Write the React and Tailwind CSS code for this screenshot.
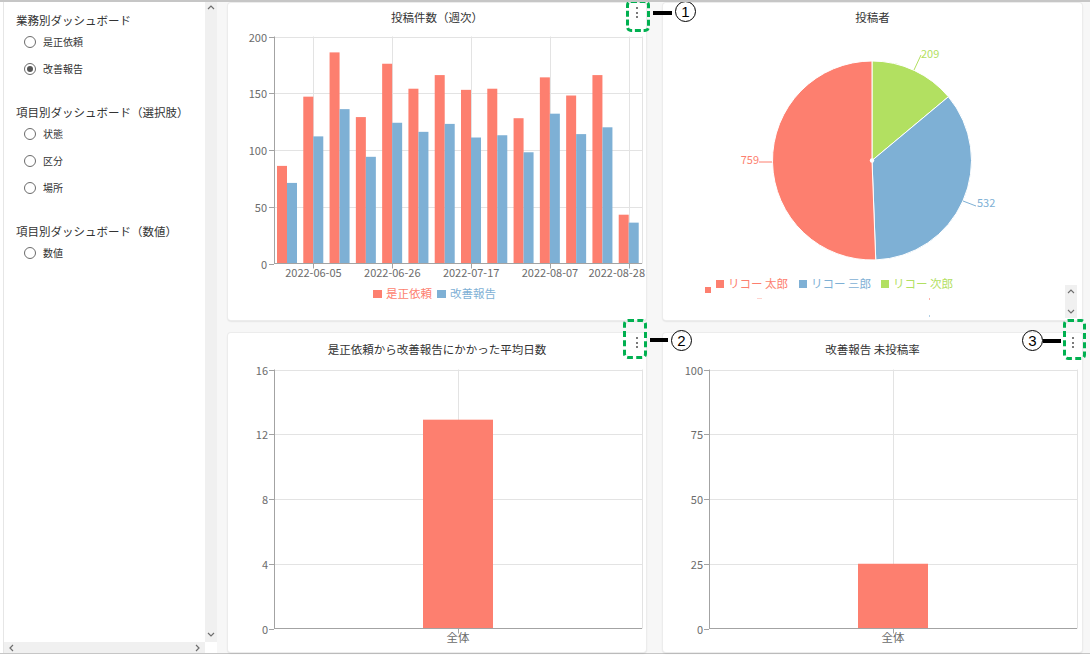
import React from 'react';

const RED = '#fd7f6f';
const BLUE = '#7eb0d5';
const GREEN = '#b2e061';
const GRID = '#e3e3e3';
const AXIS = '#a3a3a3';
const LABEL = '#6b6b6b';

// 週次の投稿件数 [是正依頼, 改善報告]
const weekly = [
  [86, 71], [147, 112], [186, 136], [129, 94], [176, 124], [154, 116], [166, 123],
  [153, 111], [154, 113], [128, 98], [164, 132], [148, 114], [166, 120], [43, 36],
];

const weekLabels = [
  { i: 1, text: '2022-06-05' },
  { i: 4, text: '2022-06-26' },
  { i: 7, text: '2022-07-17' },
  { i: 10, text: '2022-08-07' },
  { i: 13, text: '2022-08-28' },
];

const posters = [
  { name: 'リコー 次郎', value: 209, color: GREEN },
  { name: 'リコー 三郎', value: 532, color: BLUE },
  { name: 'リコー 太郎', value: 759, color: RED },
];

const sections = [
  { title: '業務別ダッシュボード', items: [{ label: '是正依頼' }, { label: '改善報告', checked: true }] },
  { title: '項目別ダッシュボード（選択肢）', items: [{ label: '状態' }, { label: '区分' }, { label: '場所' }] },
  { title: '項目別ダッシュボード（数値）', items: [{ label: '数値' }] },
];

const px = v => Math.round(v) + 0.5;

const Chevron = ({ up }) => (
  <svg width="8" height="6" viewBox="0 0 8 6">
    <polyline
      points={up ? '1,5 4,2 7,5' : '1,1 4,4 7,1'}
      fill="none"
      stroke="#6e6e6e"
      strokeWidth="1.2"
    />
  </svg>
);

const ChevronSide = ({ left }) => (
  <svg width="6" height="8" viewBox="0 0 6 8">
    <polyline
      points={left ? '5,1 2,4 5,7' : '1,1 4,4 1,7'}
      fill="none"
      stroke="#6e6e6e"
      strokeWidth="1.2"
    />
  </svg>
);

const Radio = ({ label, checked }) => (
  <div className="h-[27px] flex items-center pl-[20px] gap-[7px]">
    <span className="w-[12px] h-[12px] rounded-full border border-[#6b6b6b] bg-white flex items-center justify-center">
      {checked && <span className="w-[6px] h-[6px] rounded-full bg-[#555]" />}
    </span>
    <span className="text-[10px] text-[#333] leading-none">{label}</span>
  </div>
);

const Sidebar = () => (
  <aside className="w-[217px] flex flex-col bg-white pl-[3px]">
    <div className="flex flex-1 min-h-0 border-l border-[#e6e6e6]">
      <div className="flex-1 pt-[10px]">
        {sections.map((s, idx) => (
          <div key={s.title} className={idx > 0 ? 'mt-[22px]' : ''}>
            <div className="h-[16px] pl-[12px] text-[11.5px] leading-[16px] text-[#333]">{s.title}</div>
            {s.items.map(it => (
              <Radio key={it.label} label={it.label} checked={it.checked} />
            ))}
          </div>
        ))}
      </div>
      <div className="w-[12px] bg-[#f0f0f0] flex flex-col justify-between items-center pt-[2px] pb-[4px]">
        <Chevron up />
        <Chevron />
      </div>
    </div>
    <div className="h-[11px] flex">
      <div className="flex-1 bg-[#f0f0f0] flex items-center justify-between px-[4px] border-l border-[#e6e6e6]">
        <ChevronSide left />
        <ChevronSide />
      </div>
      <div className="w-[12px] bg-white" />
    </div>
  </aside>
);

const Card = ({ title, lower, menu, children }) => (
  <div className="relative bg-white rounded-[3px] shadow-[0_0_0_1px_#ececec,0_1px_2px_rgba(0,0,0,0.22)] flex flex-col overflow-hidden">
    <div className={`h-[28px] leading-[28px] text-center text-[11.5px] text-[#333] ${lower ? 'mt-[2px]' : ''}`}>
      {title}
    </div>
    {menu && (
      <div className="absolute top-[3px] right-[8px] flex flex-col items-center gap-[2.5px] py-[1px]">
        <span className="w-[2px] h-[2px] bg-[#7a7a7a]" />
        <span className="w-[2px] h-[2px] bg-[#7a7a7a]" />
        <span className="w-[2px] h-[2px] bg-[#7a7a7a]" />
      </div>
    )}
    {children}
  </div>
);

const WeeklyChart = () => {
  const L = 46, R = 414, T = 5.5, B = 232.5;
  const k = (B - T) / 200;
  const gw = (R - L) / weekly.length;
  const y = v => B - v * k;
  return (
    <svg width="418" height="289" className="block" overflow="visible">
      {[50, 100, 150, 200].map(v => (
        <line key={v} x1={L} x2={R} y1={px(y(v))} y2={px(y(v))} stroke={GRID} />
      ))}
      {weekLabels.map(({ i }) => (
        <line key={i} x1={px(L + (i + 0.5) * gw)} x2={px(L + (i + 0.5) * gw)} y1={T} y2={B} stroke={GRID} />
      ))}
      <line x1={px(R)} x2={px(R)} y1={T} y2={B} stroke={GRID} />
      {weekly.map(([a, b], i) => (
        <g key={i}>
          <rect x={L + i * gw + 3} y={y(a)} width="10" height={a * k} fill={RED} />
          <rect x={L + i * gw + 13} y={y(b)} width="10" height={b * k} fill={BLUE} />
        </g>
      ))}
      <line x1={L + 0.5} x2={L + 0.5} y1={T} y2={B} stroke={AXIS} />
      <line x1={L} x2={R} y1={B} y2={B} stroke={AXIS} />
      {[0, 50, 100, 150, 200].map(v => (
        <g key={v}>
          <line x1={L - 5} x2={L} y1={px(y(v))} y2={px(y(v))} stroke={AXIS} />
          <text x={L - 7} y={y(v) + 5} textAnchor="end" fontSize="11" fill={LABEL}>{v}</text>
        </g>
      ))}
      {weekLabels.map(({ i, text }, n) => {
        const cx = L + (i + 0.5) * gw;
        const last = n === weekLabels.length - 1;
        return (
          <g key={text}>
            <line x1={px(cx)} x2={px(cx)} y1={B} y2={B + 5} stroke={AXIS} />
            <text
              x={last ? 417 : cx}
              y="246"
              textAnchor={last ? 'end' : 'middle'}
              fontSize="11"
              fill={LABEL}
            >
              {text}
            </text>
          </g>
        );
      })}
      <rect x="145" y="259" width="9" height="8" fill={RED} />
      <text x="158" y="267" fontSize="11.5" fill={RED}>是正依頼</text>
      <rect x="209" y="259" width="9" height="8" fill={BLUE} />
      <text x="222" y="267" fontSize="11.5" fill={BLUE}>改善報告</text>
    </svg>
  );
};

const arc = (cx, cy, r, a0, a1) => {
  const p = a => [cx + r * Math.sin(a), cy - r * Math.cos(a)];
  const [x0, y0] = p(a0);
  const [x1, y1] = p(a1);
  const large = a1 - a0 > Math.PI ? 1 : 0;
  return `M${cx},${cy} L${x0},${y0} A${r},${r} 0 ${large} 1 ${x1},${y1} Z`;
};

const PosterPie = () => {
  const cx = 209, cy = 129.5, r = 99.5;
  const total = posters.reduce((s, p) => s + p.value, 0);
  let acc = 0;
  const slices = posters.map(p => {
    const a0 = (acc / total) * Math.PI * 2;
    acc += p.value;
    const a1 = (acc / total) * Math.PI * 2;
    return { ...p, a0, a1 };
  });
  return (
    <svg width="419" height="289" className="block">
      {slices.map(s => (
        <path key={s.name} d={arc(cx, cy, r, s.a0, s.a1)} fill={s.color} stroke="#fff" strokeWidth="1" />
      ))}
      <circle cx={cx} cy={cy} r="2.2" fill="#fff" />
      {/* 209 */}
      <polyline points="251,39 258,24" fill="none" stroke={GREEN} strokeWidth="1" />
      <text x="258" y="27" fontSize="11" fill={GREEN}>209</text>
      {/* 532 */}
      <polyline points="300,170 313,175" fill="none" stroke={BLUE} strokeWidth="1" />
      <text x="314" y="176" fontSize="11" fill={BLUE}>532</text>
      {/* 759 */}
      <polyline points="109,131 96,131" fill="none" stroke={RED} strokeWidth="1" />
      <text x="96" y="133" fontSize="11" textAnchor="end" fill={RED}>759</text>

      <rect x="42" y="256" width="6" height="6" fill={RED} />
      <rect x="53" y="249" width="8" height="8" fill={RED} />
      <text x="65" y="257" fontSize="11.5" fill={RED}>リコー 太郎</text>
      <rect x="136" y="249" width="8" height="8" fill={BLUE} />
      <text x="148" y="257" fontSize="11.5" fill={BLUE}>リコー 三郎</text>
      <rect x="218" y="249" width="8" height="8" fill={GREEN} />
      <text x="230" y="257" fontSize="11.5" fill={GREEN}>リコー 次郎</text>

      <rect x="94" y="267" width="5" height="1" fill={RED} opacity="0.35" />
      <rect x="266" y="267" width="1" height="2" fill={RED} opacity="0.6" />
      <rect x="266" y="284" width="1" height="2" fill={BLUE} opacity="0.6" />

      <rect x="402" y="254" width="12" height="33" fill="#f0f0f0" />
      <polyline points="405,262 408,259 411,262" fill="none" stroke="#6e6e6e" strokeWidth="1.1" />
      <polyline points="405,279 408,282 411,279" fill="none" stroke="#6e6e6e" strokeWidth="1.1" />
    </svg>
  );
};

const SingleBar = ({ max, ticks, value }) => {
  const L = 46, R = 414, T = 6.5, B = 265.5;
  const k = (B - T) / max;
  const y = v => B - v * k;
  const mid = 230;
  return (
    <svg width="419" height="289" className="block" overflow="visible">
      {ticks.slice(1).map(v => (
        <line key={v} x1={L} x2={R} y1={px(y(v))} y2={px(y(v))} stroke={GRID} />
      ))}
      <line x1={mid + 0.5} x2={mid + 0.5} y1={T} y2={B} stroke={GRID} />
      <line x1={px(R)} x2={px(R)} y1={T} y2={B} stroke={GRID} />
      <rect x="195" y={y(value)} width="70" height={value * k} fill={RED} />
      <line x1={L + 0.5} x2={L + 0.5} y1={T} y2={B} stroke={AXIS} />
      <line x1={L} x2={R} y1={B} y2={B} stroke={AXIS} />
      {ticks.map(v => (
        <g key={v}>
          <line x1={L - 5} x2={L} y1={px(y(v))} y2={px(y(v))} stroke={AXIS} />
          <text x={L - 6} y={y(v) + 5} textAnchor="end" fontSize="11" fill={LABEL}>{v}</text>
        </g>
      ))}
      <line x1={mid + 0.5} x2={mid + 0.5} y1={B} y2={B + 5} stroke={AXIS} />
      <text x={mid} y="279" textAnchor="middle" fontSize="11.5" fill={LABEL}>全体</text>
    </svg>
  );
};

const Marker = ({ box, dash, num, circle }) => (
  <>
    <div className={`absolute border-[3px] border-dashed border-[#00b050] rounded-[5px] ${box}`} />
    <div className={`absolute h-[4px] bg-black ${dash}`} />
    <div className={`absolute w-[21px] h-[21px] rounded-full border border-black bg-transparent flex items-center justify-center text-[15px] leading-none text-black font-['Liberation_Sans',sans-serif] ${circle}`}>
      {num}
    </div>
  </>
);

export default function App() {
  return (
    <div className="relative w-[1090px] h-[656px] overflow-hidden bg-[#f7f7f7] border-t-2 border-[#c6c6c6] flex flex-col font-['Noto_Sans_CJK_JP',sans-serif] text-[#333]">
      <div className="flex h-[651px]">
        <Sidebar />
        <main className="flex-1 pl-[11px] pr-[8px] pt-[1px] grid grid-cols-[418px_419px] grid-rows-[317px_319px] gap-x-[17px] gap-y-[13px]">
          <Card title="投稿件数（週次）" menu>
            <WeeklyChart />
          </Card>
          <Card title="投稿者">
            <PosterPie />
          </Card>
          <Card title="是正依頼から改善報告にかかった平均日数" lower menu>
            <SingleBar max={16} ticks={[0, 4, 8, 12, 16]} value={12.9} />
          </Card>
          <Card title="改善報告 未投稿率" lower menu>
            <SingleBar max={100} ticks={[0, 25, 50, 75, 100]} value={25} />
          </Card>
        </main>
      </div>
      <div className="h-[3px] border-t border-[#c6c6c6] bg-white" />

      <Marker box="left-[626px] top-[-2px] w-[24px] h-[32px]" dash="left-[653px] top-[9px] w-[19px]" circle="left-[675px] top-[-1px]" num="1" />
      <Marker box="left-[623px] top-[317px] w-[24px] h-[40px]" dash="left-[650px] top-[336px] w-[18px]" circle="left-[671px] top-[328px]" num="2" />
      <Marker box="left-[1063px] top-[317px] w-[23px] h-[41px]" dash="left-[1043px] top-[337px] w-[18px]" circle="left-[1022px] top-[328px]" num="3" />
    </div>
  );
}
